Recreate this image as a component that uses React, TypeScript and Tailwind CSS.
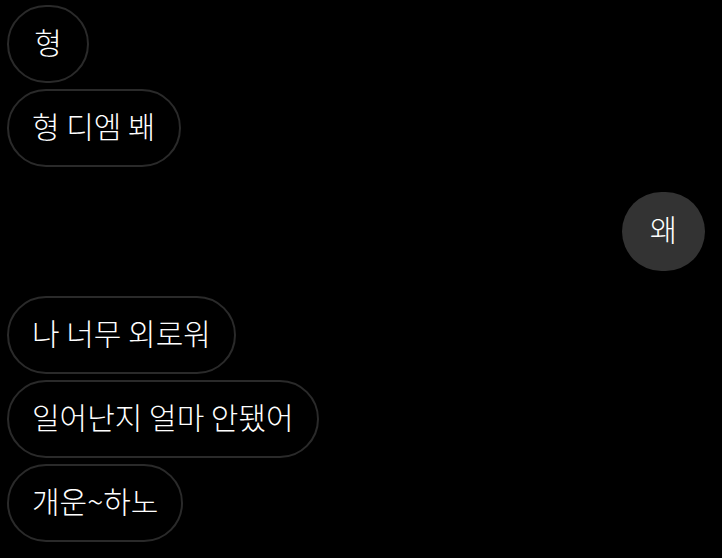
const messages: { text: string; mine?: boolean; gapBefore?: boolean }[] = [
  { text: '형' },
  { text: '형 디엠 봬' },
  { text: '왜', mine: true, gapBefore: true },
  { text: '나 너무 외로워', gapBefore: true },
  { text: '일어난지 얼마 안됐어' },
  { text: '개운~하노' },
];

function Bubble({ text, mine }: { text: string; mine?: boolean }) {
  return (
    <div
      className={
        mine
          ? 'flex h-[79px] min-w-[83px] items-center justify-center rounded-full bg-[#333333] px-6 pb-[6px] text-[30px] font-light text-white'
          : 'flex h-[78px] min-w-[82px] items-center justify-center rounded-full border-2 border-[#2a2a2a] px-[23px] pb-[6px] text-[30px] font-light text-white'
      }
    >
      {text}
    </div>
  );
}

export default function App() {
  return (
    <div
      className="flex h-[558px] w-[722px] flex-col bg-black px-[7px] pt-[5px]"
      style={{ fontFamily: '"Noto Sans CJK KR", "Noto Sans", sans-serif' }}
    >
      {messages.map((m, i) => (
        <div
          key={i}
          className={
            (m.mine ? 'flex justify-end pr-[10px] ' : 'flex justify-start ') +
            (i === 0 ? '' : m.gapBefore ? 'mt-[25px]' : 'mt-[6px]')
          }
        >
          <Bubble text={m.text} mine={m.mine} />
        </div>
      ))}
    </div>
  );
}
